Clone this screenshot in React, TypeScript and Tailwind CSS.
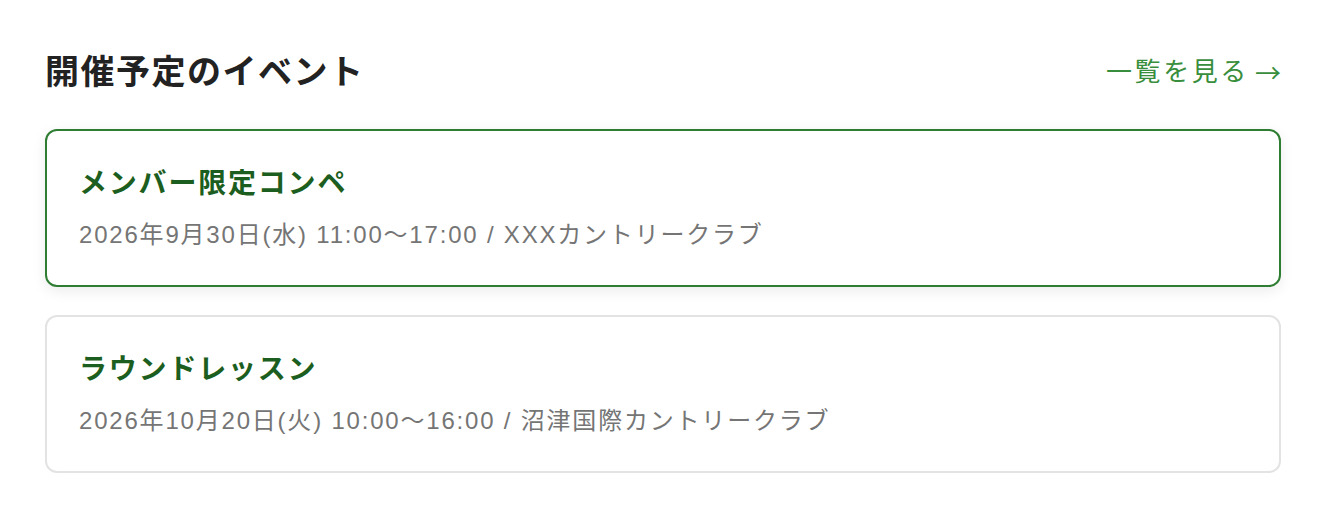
const events = [
  {
    id: "compe",
    title: "メンバー限定コンペ",
    detail: "2026年9月30日(水) 11:00〜17:00 / XXXカントリークラブ",
    active: true,
  },
  {
    id: "lesson",
    title: "ラウンドレッスン",
    detail: "2026年10月20日(火) 10:00〜16:00 / 沼津国際カントリークラブ",
    active: false,
  },
];

export default function App() {
  return (
    <div
      className="min-h-[518px] bg-white px-[45px] pt-[47px]"
      style={{ fontFamily: '"Liberation Sans", "Noto Sans CJK JP", sans-serif' }}
    >
      <div className="mb-[32px] flex h-[50px] items-center justify-between">
        <h2 className="text-[34px] font-bold leading-[50px] tracking-[1.5px] text-[#222222]">開催予定のイベント</h2>
        <a href="#" className="flex items-center text-[26px] leading-[50px] tracking-[2.6px] text-[#388e3c]">
          一覧を見る
          <span className="ml-[6px] font-['Noto_Sans_CJK_JP',sans-serif] tracking-normal">→</span>
        </a>
      </div>

      <div className="flex flex-col gap-[28px]">
        {events.map((event) => (
          <div
            key={event.id}
            className={
              event.active
                ? "rounded-[12px] border-2 border-[#2e7d32] bg-white p-[32px] shadow-[0_4px_14px_rgba(0,0,0,0.08)]"
                : "rounded-[12px] border-2 border-[#e3e3e3] bg-white p-[32px]"
            }
          >
            <p className="text-[28px] font-bold leading-[42px] tracking-[1.8px] text-[#1b5e20]">{event.title}</p>
            <p className="mt-[12px] text-[24px] leading-[36px] tracking-[1.8px] text-[#757575]">{event.detail}</p>
          </div>
        ))}
      </div>
    </div>
  );
}
